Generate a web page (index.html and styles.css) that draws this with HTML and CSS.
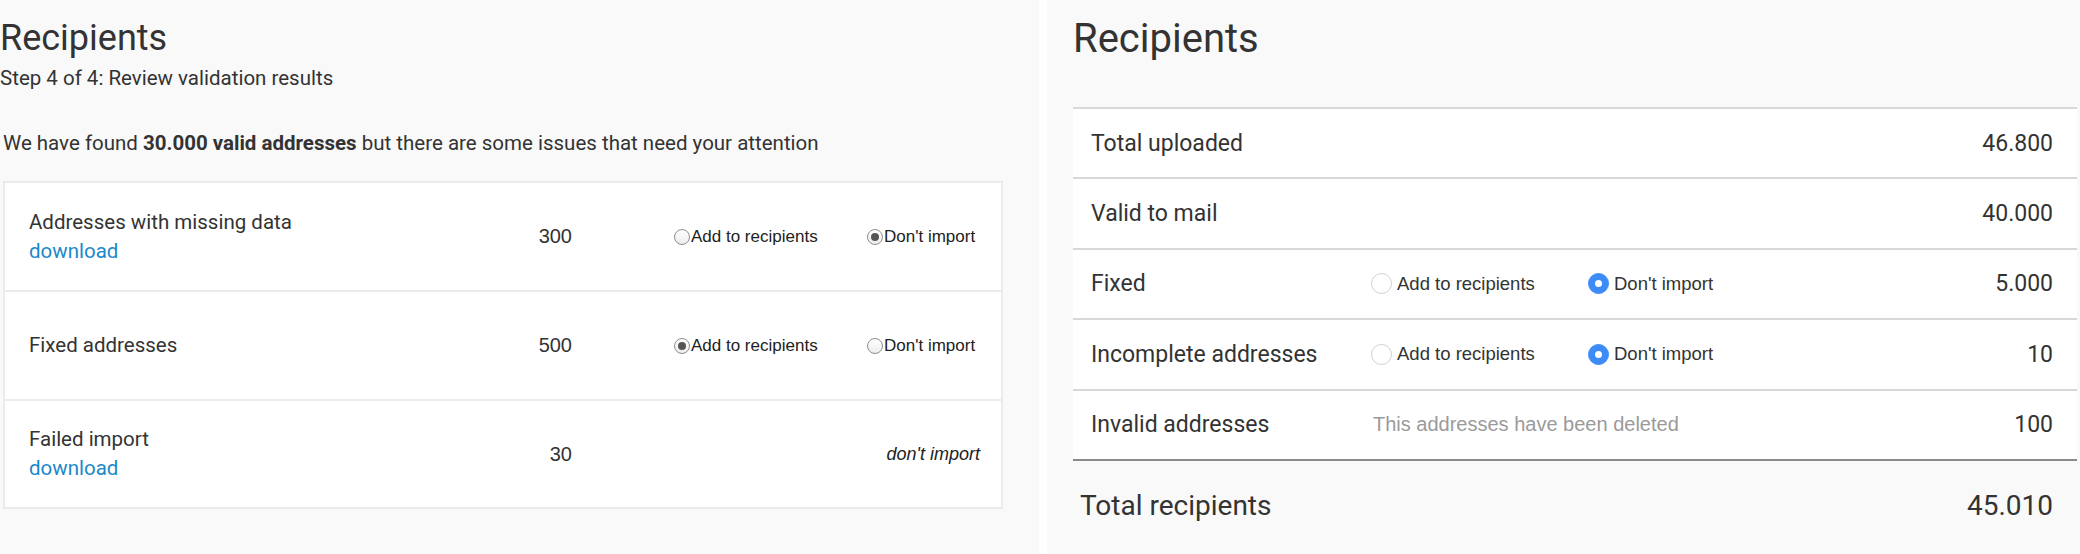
FILE: index.html
```html
<!DOCTYPE html>
<html lang="en">
<head>
    <meta charset="UTF-8">
    <meta name="viewport" content="width=device-width, initial-scale=1.0">
    <title>Recipients</title>
    <link rel="stylesheet" href="styles.css">
</head>
<body>

<div class="page">

    <!-- Variante A: assistente passo a passo -->
    <section class="panel panel-wizard">
        <h1 class="title">Recipients</h1>
        <div class="step">Step 4 of 4: Review validation results</div>
        <p class="summary">We have found <strong>30.000 valid addresses</strong> but there are some issues that need your attention</p>

        <div class="issues">
            <div class="issue">
                <div class="issue-name">Addresses with missing data<br><a href="#" class="link">download</a></div>
                <div class="issue-count">300</div>
                <label class="opt opt-first"><span class="mac-radio"></span>Add to recipients</label>
                <label class="opt"><span class="mac-radio checked"></span>Don't import</label>
            </div>
            <div class="issue">
                <div class="issue-name">Fixed addresses</div>
                <div class="issue-count">500</div>
                <label class="opt opt-first"><span class="mac-radio checked"></span>Add to recipients</label>
                <label class="opt"><span class="mac-radio"></span>Don't import</label>
            </div>
            <div class="issue">
                <div class="issue-name">Failed import<br><a href="#" class="link">download</a></div>
                <div class="issue-count">30</div>
                <div class="no-import">don't import</div>
            </div>
        </div>
    </section>

    <!-- Variante B: resumo em tabela -->
    <section class="panel panel-summary">
        <h1 class="title title-lg">Recipients</h1>

        <div class="totals">
            <div class="total-row">
                <div class="total-name">Total uploaded</div>
                <div class="total-value">46.800</div>
            </div>
            <div class="total-row">
                <div class="total-name">Valid to mail</div>
                <div class="total-value">40.000</div>
            </div>
            <div class="total-row">
                <div class="total-name">Fixed</div>
                <label class="choice"><span class="radio"></span>Add to recipients</label>
                <label class="choice"><span class="radio on"></span>Don't import</label>
                <div class="total-value">5.000</div>
            </div>
            <div class="total-row">
                <div class="total-name">Incomplete addresses</div>
                <label class="choice"><span class="radio"></span>Add to recipients</label>
                <label class="choice"><span class="radio on"></span>Don't import</label>
                <div class="total-value">10</div>
            </div>
            <div class="total-row last">
                <div class="total-name">Invalid addresses</div>
                <div class="note">This addresses have been deleted</div>
                <div class="total-value">100</div>
            </div>
        </div>

        <div class="grand-total">
            <span>Total recipients</span>
            <span>45.010</span>
        </div>
    </section>

</div>

</body>
</html>
```

FILE: styles.css
```css
body {
    margin: 0;
    background: #fff;
    font-family: Roboto, "Liberation Sans", sans-serif;
    color: #333;
}
.page {
    display: flex;
    gap: 8px;
    height: 554px;
    overflow: hidden;
}
.panel {
    background-color: #f9f9f9;
    box-sizing: border-box;
}
.title {
    margin: 0;
    font-size: 36px;
    font-weight: 400;
    line-height: 42px;
    color: #333;
}

/* Variante A */
.panel-wizard {
    width: 1039px;
    padding-top: 17px;
}
.step {
    margin-top: 7px;
    font-size: 20.5px;
    line-height: 24px;
}
.summary {
    margin: 41px 0 0 3px;
    font-size: 20.5px;
    line-height: 24px;
}
.summary strong {
    font-weight: 700;
}
.issues {
    margin: 26px 0 0 3px;
    width: 1000px;
    border: 2px solid #ebebeb;
    background: #fff;
    box-sizing: border-box;
}
.issue {
    display: grid;
    grid-template-columns: 1fr 132px 295px 110px;
    align-items: center;
    height: 107px;
    padding: 0 24px;
    border-bottom: 2px solid #ebebeb;
}
.issue:last-child {
    border-bottom: none;
    height: 106px;
}
.issue-name {
    font-size: 20.5px;
    line-height: 29px;
}
.link {
    color: #1b88c9;
    text-decoration: none;
}
.issue-count {
    text-align: right;
    font-family: "Liberation Sans", Arial, sans-serif;
    font-size: 20px;
}
.opt {
    display: flex;
    align-items: center;
    font-family: "Liberation Sans", Arial, sans-serif;
    font-size: 17px;
    color: #222;
    cursor: pointer;
}
.opt-first {
    padding-left: 102px;
}
.mac-radio {
    width: 14px;
    height: 14px;
    margin-right: 1px;
    border: 1px solid #8e8e8e;
    border-radius: 50%;
    background: linear-gradient(#fff, #ededed);
    position: relative;
}
.mac-radio.checked::after {
    content: "";
    position: absolute;
    left: 3px;
    top: 3px;
    width: 8px;
    height: 8px;
    border-radius: 50%;
    background: #555;
}
.no-import {
    grid-column: 3 / 5;
    text-align: right;
    margin-right: -3px;
    font-family: "Liberation Sans", Arial, sans-serif;
    font-style: italic;
    font-size: 18px;
    color: #222;
}

/* Variante B */
.panel-summary {
    flex: 1;
    padding: 15px 3px 0 26px;
}
.title-lg {
    font-size: 40px;
    line-height: 47px;
}
.totals {
    margin-top: 45px;
    border-top: 2px solid #d8d8d8;
    background: #fff;
}
.total-row {
    display: grid;
    grid-template-columns: 280px 217px 1fr auto;
    align-items: center;
    height: 68.4px;
    padding: 0 24px 0 18px;
    border-bottom: 2px solid #d8d8d8;
    font-size: 23px;
}
.total-row.last {
    border-bottom-color: #8a8a8a;
}
.total-value {
    grid-column: 4;
    text-align: right;
}
.choice {
    display: flex;
    align-items: center;
    font-family: "Liberation Sans", Arial, sans-serif;
    font-size: 18.5px;
    color: #333;
    cursor: pointer;
}
.radio {
    width: 19px;
    height: 19px;
    margin-right: 5px;
    border: 1px solid #cfcfcf;
    border-radius: 50%;
    background: #fff;
    position: relative;
}
.radio.on {
    border-color: #3d8bf7;
    background: #3d8bf7;
}
.radio.on::after {
    content: "";
    position: absolute;
    left: 6px;
    top: 6px;
    width: 7px;
    height: 7px;
    border-radius: 50%;
    background: #fff;
}
.note {
    grid-column: 2 / 4;
    padding-left: 2px;
    font-family: "Liberation Sans", Arial, sans-serif;
    font-size: 20px;
    color: #9a9a9a;
}
.grand-total {
    display: flex;
    justify-content: space-between;
    padding: 28px 24px 0 7px;
    font-size: 28px;
    line-height: 33px;
}
```
